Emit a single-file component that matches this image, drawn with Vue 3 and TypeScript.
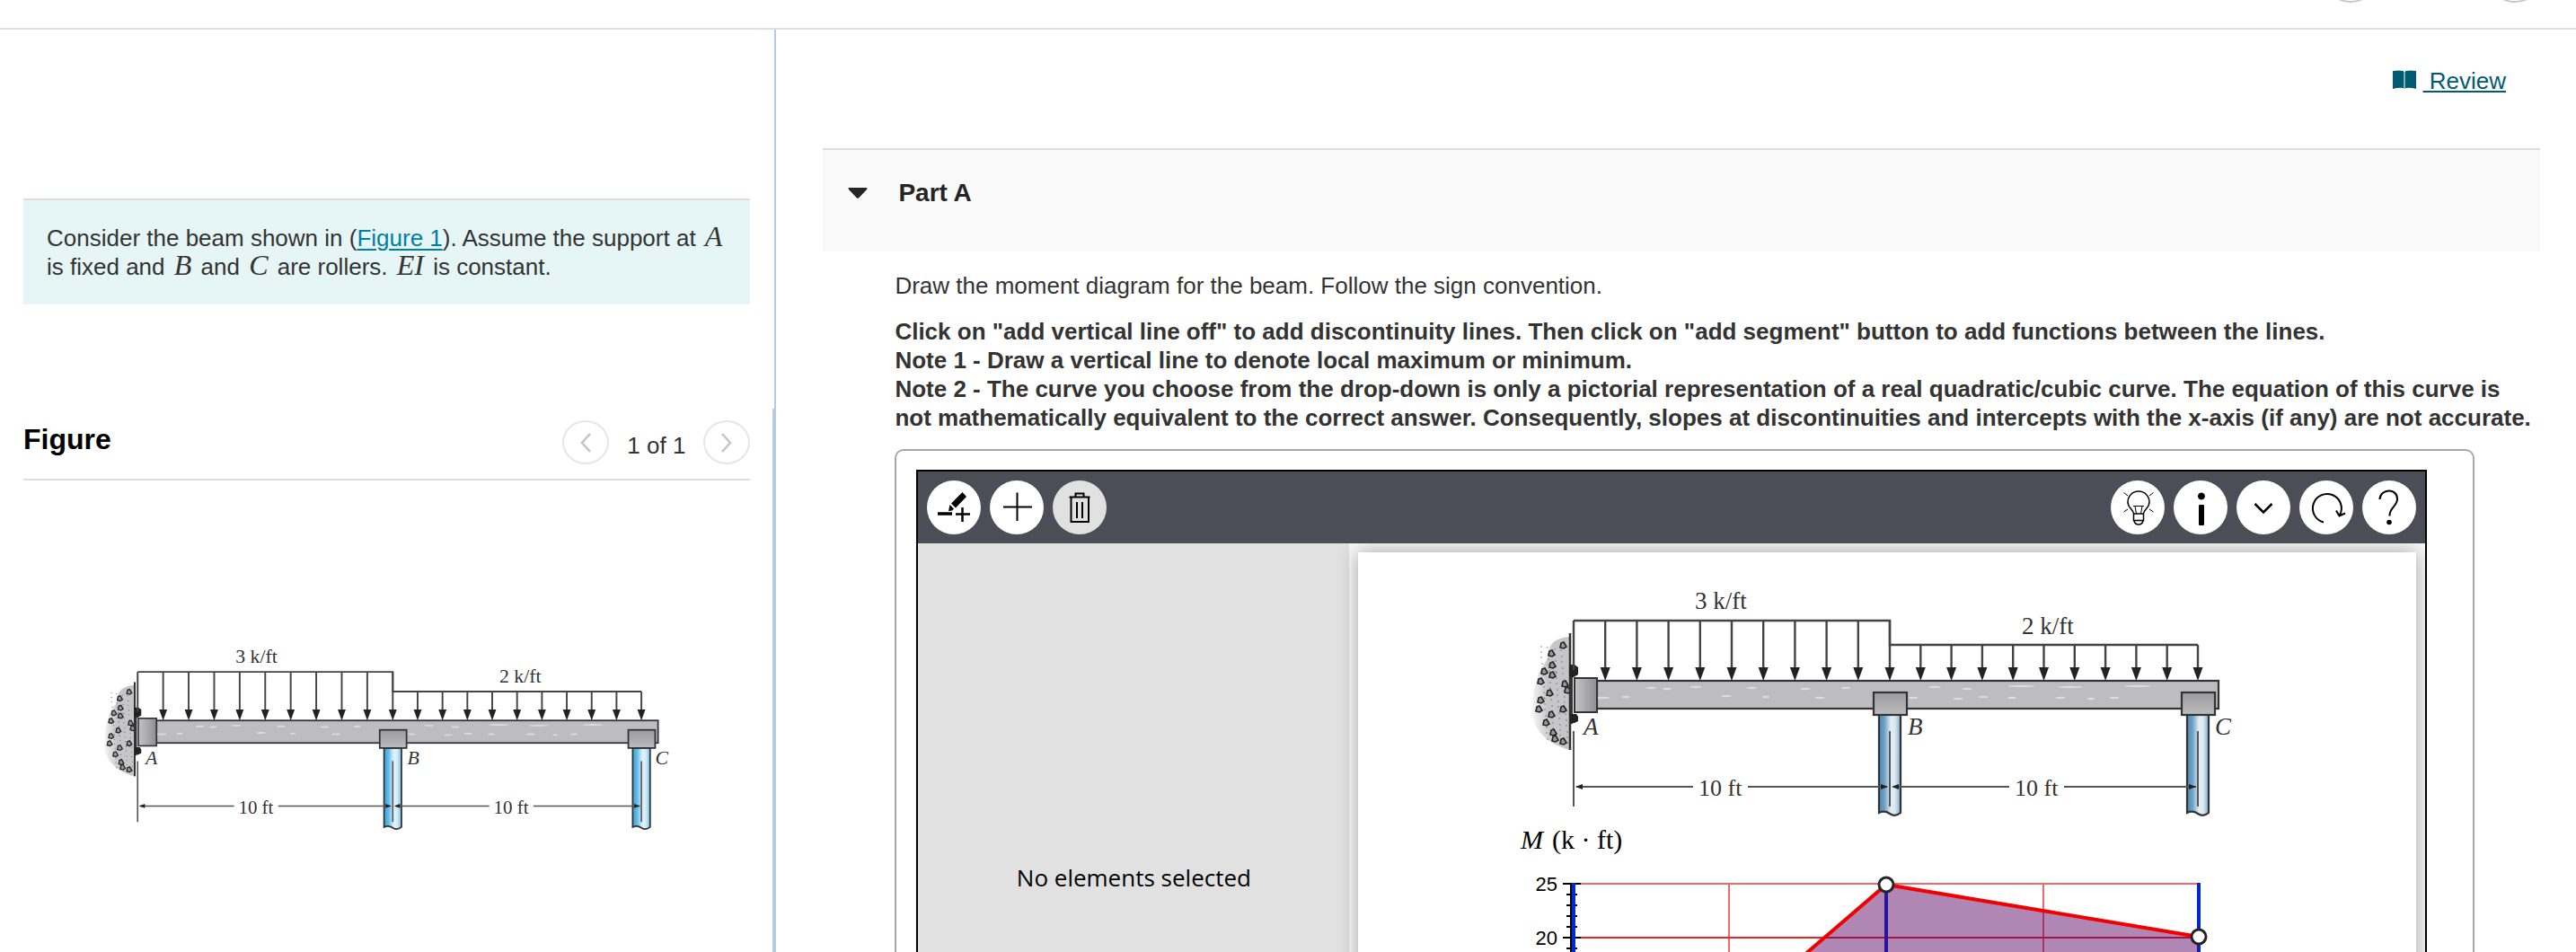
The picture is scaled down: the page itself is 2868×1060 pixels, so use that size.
<script setup lang="ts">
interface Label {
  text: string
  x: number
  y: number
  size: number
  italic?: boolean
}

interface ToolButton {
  name: string
  muted?: boolean
}

// Beam geometry, in drawing units
const arrowsLeft: number[] = Array.from({ length: 11 }, (_, i) => 92 + i * 35.2)
const arrowsRight: number[] = Array.from({ length: 10 }, (_, i) => 444 + (i + 1) * 34.3)
const posts: number[] = [444, 787]

// Wood grain streaks and stones in the wall
const grain: number[][] = [
  [124, 137, 18], [178, 126, 12], [196, 127, 10], [150, 136, 9], [228, 125, 14], [262, 135, 12],
  [290, 126, 12], [306, 136, 8], [350, 127, 12], [366, 137, 12], [395, 126, 10], [470, 137, 10],
  [494, 125, 14], [530, 127, 12], [520, 138, 12], [548, 136, 12], [590, 124, 30], [580, 137, 10],
  [645, 125, 28], [634, 137, 12], [668, 138, 8], [694, 137, 10], [720, 124, 30],
]
const stones: number[][] = [
  [79, 79], [66, 88], [67, 101], [58, 108], [67, 112], [54, 119], [81, 122], [64, 132],
  [84, 129], [54, 140], [52, 150], [79, 150], [66, 156], [60, 165], [68, 176], [70, 183], [79, 186],
]
const specks: number[][] = Array.from({ length: 70 }, (_, i) => [
  56 + ((i * 17) % 30),
  80 + ((i * 29) % 108),
])

const beamLabels: Label[] = [
  { text: '3 k/ft', x: 227, y: 38, size: 27 },
  { text: '2 k/ft', x: 591, y: 66, size: 27 },
  { text: '10 ft', x: 231, y: 246, size: 26 },
  { text: '10 ft', x: 583, y: 246, size: 26 },
  { text: 'A', x: 103, y: 178, size: 27, italic: true },
  { text: 'B', x: 464, y: 178, size: 27, italic: true },
  { text: 'C', x: 806, y: 178, size: 27, italic: true },
]

const editButtons: ToolButton[] = [
  { name: 'Add vertical line off' },
  { name: 'Add segment' },
  { name: 'Delete', muted: true },
]
const helpButtons: ToolButton[] = [
  { name: 'Hints' },
  { name: 'Information' },
  { name: 'More' },
  { name: 'Reset' },
  { name: 'Help' },
]

const minorTicks: number[] = [381, 393, 405, 417, 441, 453]
</script>

<template>
  <svg class="defs" aria-hidden="true">
    <defs>
      <linearGradient id="shine">
        <stop offset="0" stop-color="#fff" stop-opacity="0" />
        <stop offset="0.25" stop-color="#fff" stop-opacity="0.2" />
        <stop offset="0.55" stop-color="#fff" stop-opacity="0.85" />
        <stop offset="0.75" stop-color="#fff" stop-opacity="0.8" />
        <stop offset="1" stop-color="#fff" stop-opacity="0.3" />
      </linearGradient>
      <linearGradient id="block" x1="0" y1="0" x2="0" y2="1">
        <stop offset="0" stop-color="#9b9b9e" />
        <stop offset="1" stop-color="#bcbcbf" />
      </linearGradient>
      <linearGradient id="plate">
        <stop offset="0" stop-color="#c4c4c6" />
        <stop offset="1" stop-color="#8f8f92" />
      </linearGradient>
      <radialGradient id="rock" cx="1" cy="0.5" r="1">
        <stop offset="0.6" stop-color="#c6c6c8" />
        <stop offset="1" stop-color="#c6c6c8" stop-opacity="0.2" />
      </radialGradient>
      <symbol id="beam" viewBox="0 0 860 280">
        <path d="M87 69C74 70 64 76 64 88C62 100 54 102 52 114C46 128 48 134 46 150C46 170 58 186 87 195Z" fill="url(#rock)" />
        <circle v-for="(s, i) in specks" :key="'k' + i" :cx="s[0]" :cy="s[1]" r="0.7" fill="#666" />
        <path v-for="(s, i) in stones" :key="'s' + i" :d="`M${s[0] - 2} ${s[1] + 2}l1-5 3-1 3 5-3 2z`" class="stone" />
        <path d="M88 65V195" class="ink" stroke-width="2.5" />
        <path d="M90 105V166" class="ink" stroke-width="2" />
        <path d="M87 100h6l4 3v8l-5 3h-5zM88 155h7l2 3v5l-4 2h-5z" fill="#222" />
        <rect x="118" y="118" width="692" height="31" fill="#bdbdc0" class="ink" stroke-width="2.2" />
        <ellipse v-for="(g, i) in grain" :key="'g' + i" :cx="g[0]" :cy="g[1]" :rx="g[2] / 2" ry="1.2" fill="#dcdcde" />
        <rect x="93" y="115" width="25" height="38" fill="url(#plate)" class="ink" stroke-width="2" />
        <path d="M92 51H444V78H787" class="load" />
        <g v-for="x in arrowsLeft" :key="'l' + x">
          <path :d="`M${x} 51V106`" class="load" />
          <path v-if="x > 92" :d="`M${x - 5.5} 103h11l-5.5 15z`" fill="#222" />
        </g>
        <g v-for="x in arrowsRight" :key="'r' + x">
          <path :d="`M${x} 78V106`" class="load" />
          <path :d="`M${x - 5.5} 103h11l-5.5 15z`" fill="#222" />
        </g>
        <g v-for="x in posts" :key="'p' + x">
          <path :d="`M${x - 12} 156v109q6-3 12 1t12-1v-109z`" fill="currentColor" />
          <path :d="`M${x - 12} 156v109q6-3 12 1t12-1v-109z`" fill="url(#shine)" class="ink" stroke-width="2.2" />
          <rect :x="x - 18" y="131" width="37" height="25" fill="url(#block)" class="ink" stroke-width="2.2" />
          <path :d="`M${x} 174V258`" class="dim" />
        </g>
        <path d="M92 174V258M95 236H225M286 236H441M448 236H577M638 236H785" class="dim" />
        <path d="M94 236l8-3v6zM442 236l-8-3v6zM446 236l8-3v6zM785 236l-8-3v6z" fill="#222" />
      </symbol>
    </defs>
  </svg>

  <div class="app">
    <header class="topbar">
      <button class="round" aria-label="Previous item"></button>
      <button class="round" aria-label="Next item"></button>
    </header>

    <div class="panes">
      <aside class="problem">
        <p class="statement">
          Consider the beam shown in (<a href="#figure">Figure 1</a>). Assume the support at <i>A</i>
          is fixed and <i>B</i> and <i>C</i> are rollers. <i>EI</i> is constant.
        </p>
        <section id="figure" class="figure">
          <div class="figure-head">
            <h2>Figure</h2>
            <nav class="pager">
              <button aria-label="Previous figure">
                <svg viewBox="0 0 12 22" width="12" height="22"><path d="M11 1L2 11L11 21" /></svg>
              </button>
              <span>1 of 1</span>
              <button aria-label="Next figure">
                <svg viewBox="0 0 12 22" width="12" height="22"><path d="M1 1L10 11L1 21" /></svg>
              </button>
            </nav>
          </div>
          <svg class="figure-beam" viewBox="0 0 860 280">
            <use href="#beam" width="860" height="280" />
            <text
              v-for="l in beamLabels"
              :key="l.text + l.x"
              :x="l.x"
              :y="l.y"
              :font-size="l.size"
              :class="['beam-label', { italic: l.italic }]"
            >{{ l.text }}</text>
          </svg>
        </section>
      </aside>

      <div class="divider"></div>

      <main class="work">
        <div class="review">
          <a href="#review">
            <svg viewBox="0 0 26 22" width="26" height="22" aria-hidden="true">
              <path d="M0 1Q6 0 12 1V20Q6 19 0 21Z M14 1Q20 0 26 1V21Q20 19 14 20Z" fill="#005a70" />
              <path d="M13 2V21" stroke="#7fb0bc" stroke-width="2" />
            </svg>
            <span>&nbsp;Review</span>
          </a>
        </div>

        <section class="part">
          <h3>
            <svg viewBox="0 0 22 12" width="22" height="12" aria-hidden="true"><path d="M1 0H21Q22 1 21 2L12 11.500Q11 12 10 11.500L1 2Q0 1 1 0Z" fill="#252525" /></svg>
            Part A
          </h3>
        </section>

        <div class="content">
          <p>Draw the moment diagram for the beam. Follow the sign convention.</p>
          <p class="notes">
            Click on "add vertical line off" to add discontinuity lines. Then click on "add segment" button to add functions between the lines.<br />
            Note 1 - Draw a vertical line to denote local maximum or minimum.<br />
            Note 2 - The curve you choose from the drop-down is only a pictorial representation of a real quadratic/cubic curve. The equation of this curve is not mathematically equivalent to the correct answer. Consequently, slopes at discontinuities and intercepts with the x-axis (if any) are not accurate.
          </p>

          <div class="frame">
            <div class="tool">
              <div class="toolbar">
                <div class="group">
                  <button v-for="(b, i) in editButtons" :key="b.name" :aria-label="b.name" :class="{ muted: b.muted }">
                    <svg viewBox="0 0 60 60">
                      <template v-if="i === 0">
                        <path d="M12 37H28" stroke-width="3.500" />
                        <path d="M32 37.500H48M39.500 30V46" stroke-width="2.500" />
                        <path d="M39.500 13L44 18L32 30.500L27 25.500ZM25.500 27L30 31.500L28 33.500L24 34Z" fill="#000" stroke="none" />
                      </template>
                      <path v-else-if="i === 1" d="M15 29.500H47M30.500 13.500V45" />
                      <path v-else d="M20.500 18.500V46H40V18.500M18.500 18.500H41.500M25.500 18V14.500H34.500V18M27 24V42M33 24V42" />
                    </svg>
                  </button>
                </div>
                <div class="group">
                  <button v-for="(b, i) in helpButtons" :key="b.name" :aria-label="b.name">
                    <svg viewBox="0 0 60 60">
                      <template v-if="i === 0">
                        <path d="M25.500 37C25.500 32 19 31 19 24A12 12 0 0 1 43 24C43 31 36.500 32 36.500 37ZM25.500 37V44.500H36.500V37M26 45Q27 49 31 49T36 45" stroke-width="1.500" />
                        <path d="M25 28.500H37M27 28.500L28.500 37M35 28.500L33.500 37M14.500 13.500L19 17M47.500 13.500L43 17M14.500 35L19 32M47.500 35L43 32" stroke-width="1" />
                      </template>
                      <path v-else-if="i === 1" d="M31 13.500A4 4 0 1 1 30.900 13.500ZM28 28Q28 27 29 27H33Q34 27 34 28V49Q34 50 33 50H29Q28 50 28 49Z" fill="#000" stroke="none" />
                      <path v-else-if="i === 2" d="M20.500 26L30 35.500L39.500 26" stroke-width="2.500" />
                      <path v-else-if="i === 3" d="M27 46.500A16 16 0 1 1 45 38.500M41 33.500L44.500 39.500L51 36.500" />
                      <template v-else>
                        <path d="M19.500 21C20 9 39 8 39 20.500C39 29 30 30 30.500 39.500" />
                        <circle cx="30" cy="46.500" r="2.800" fill="#000" stroke="none" />
                      </template>
                    </svg>
                  </button>
                </div>
              </div>

              <div class="workspace">
                <div class="inspector">No elements selected</div>
                <div class="canvas">
                  <svg viewBox="0 0 1178 724">
                    <svg x="148" y="25" width="860" height="280" class="canvas-beam">
                      <use href="#beam" width="860" height="280" />
                      <text
                        v-for="l in beamLabels"
                        :key="l.text + l.x"
                        :x="l.x"
                        :y="l.y"
                        :font-size="l.size"
                        :class="['beam-label', { italic: l.italic }]"
                      >{{ l.text }}</text>
                    </svg>
                    <text x="181" y="330" class="axis-title"><tspan font-style="italic">M</tspan><tspan dx="10">(k · ft)</tspan></text>

                    <path d="M248 369H936M413 369V724M763 369V724" stroke="#f0686a" stroke-width="2" />
                    <path d="M248 429H936" stroke="#e82424" stroke-width="2" />
                    <path d="M237 368V724M228 369H248M228 429H248" stroke="#000" stroke-width="2" />
                    <path v-for="y in minorTicks" :key="y" :d="`M232 ${y}H244`" stroke="#000" stroke-width="2" />
                    <path d="M240 368V724M588 370V724M936 368V724" stroke="#0028d4" stroke-width="4" />
                    <path d="M240 669L588 370L936 428V724H240Z" fill="rgb(90 3 99 / 0.48)" />
                    <path d="M240 669L588 370L936 428" fill="none" stroke="#f20000" stroke-width="4" />
                    <circle cx="588" cy="370" r="8" class="node" />
                    <circle cx="936" cy="428" r="8" class="node" />
                    <text x="222" y="377" class="tick">25</text>
                    <text x="222" y="437" class="tick">20</text>
                  </svg>
                </div>
              </div>
            </div>
          </div>
        </div>
      </main>
    </div>
  </div>
</template>

<style>
body {
  margin: 0;
  background: #fff;
}
</style>

<style scoped>
.defs {
  position: absolute;
  width: 0;
  height: 0;
}

.app {
  display: flex;
  flex-direction: column;
  height: 100vh;
  overflow: hidden;
  font: 26px/32px "Liberation Sans", Arial, sans-serif;
  color: #333;
}

.topbar {
  display: flex;
  flex: none;
  justify-content: flex-end;
  align-items: flex-end;
  gap: 119px;
  box-sizing: border-box;
  height: 33px;
  padding: 0 36px 28px 0;
  border-bottom: 2px solid #dedede;
  overflow: hidden;
}

.round {
  flex: none;
  box-sizing: border-box;
  width: 64px;
  height: 64px;
  padding: 0;
  border: 2px solid #c7c7c7;
  border-radius: 50%;
  background: #fff;
}

.panes {
  display: flex;
  flex: 1;
  min-height: 0;
}

.problem {
  flex: 0 0 30%;
  box-sizing: border-box;
  padding: 188px 25px 0 26px;
}

.statement {
  box-sizing: border-box;
  min-height: 118px;
  margin: 0;
  padding: 26px 20px 26px 26px;
  border-top: 2px solid #dedede;
  background: #e6f6f7;
}

.statement a {
  color: #007fa3;
  text-underline-offset: 3px;
}

.statement i {
  padding: 0 3px;
  font: italic 32px/24px "Liberation Serif", serif;
}

.figure {
  padding-top: 129px;
}

.figure-head {
  display: flex;
  justify-content: space-between;
  align-items: flex-start;
  height: 65px;
  border-bottom: 2px solid #dedede;
}

.figure-head h2 {
  margin: 0;
  padding-top: 3px;
  font-size: 32px;
  line-height: 36px;
  color: #000;
}

.pager {
  display: flex;
  align-items: center;
  gap: 20px;
}

.pager span {
  padding-top: 6px;
}

.pager button {
  display: flex;
  justify-content: center;
  align-items: center;
  box-sizing: border-box;
  width: 52px;
  height: 49px;
  padding: 0;
  border: 2px solid #e6e6e6;
  border-radius: 50%;
  background: #fff;
}

.pager path {
  fill: none;
  stroke: #c4c4c4;
  stroke-width: 2.5;
}

.figure-beam {
  display: block;
  width: 694px;
  margin: 172px 0 0 53px;
  color: #38a8e0;
}

.canvas-beam {
  color: #4a8ab8;
}

.ink {
  stroke: #333;
}

.load,
.dim {
  fill: none;
  stroke: #444;
  stroke-width: 2.4;
}

.dim {
  stroke: #555;
  stroke-width: 2;
}

.stone {
  fill: #999;
  stroke: #222;
  stroke-width: 1.6;
}

.beam-label {
  font-family: "Liberation Serif", serif;
  fill: #333;
}

.italic {
  font-style: italic;
}

.divider {
  flex: none;
  width: 4px;
  background: linear-gradient(#b8cbdc, #b8cbdc) right top / 2px 100% no-repeat,
    linear-gradient(#b8cbdc, #b8cbdc) left 422px / 4px 100% no-repeat;
}

.work {
  flex: 1;
  min-width: 0;
  padding: 0 40px 0 52px;
}

.review {
  display: flex;
  justify-content: flex-end;
  height: 91px;
  padding: 41px 38px 0 0;
}

.review a {
  display: flex;
  gap: 8px;
  color: #005a70;
  text-decoration: none;
}

.review svg {
  padding-top: 4px;
}

.review span {
  height: 32px;
  text-decoration: underline;
}

.part {
  box-sizing: border-box;
  height: 115px;
  padding: 32px 28px;
  border-top: 2px solid #dedede;
  background: #f9f9f9;
}

.part h3 {
  display: flex;
  align-items: center;
  gap: 34px;
  margin: 0;
  font-size: 28px;
  line-height: 32px;
  color: #252525;
}

.content {
  padding: 22px 0 0 80px;
}

.content p {
  margin: 0;
}

.content .notes {
  margin-top: 19px;
  font-weight: bold;
}

.frame {
  box-sizing: border-box;
  width: min(1759px, 100%);
  margin-top: 19px;
  padding: 21px 51px 21px 22px;
  border: 2px solid #a8a8a8;
  border-radius: 10px;
}

.tool {
  border: 2px solid #000;
}

.toolbar {
  display: flex;
  justify-content: space-between;
  padding: 10px;
  background: #4d4d57;
}

.group {
  display: flex;
  gap: 10px;
}

.group button {
  width: 60px;
  height: 60px;
  padding: 0;
  border: 0;
  border-radius: 50%;
  background: #fff;
}

.group button.muted {
  background: #e1e1e1;
}

.group svg {
  display: block;
  fill: none;
  stroke: #000;
  stroke-width: 2;
}

.workspace {
  display: flex;
  background: #f8f8f8;
  overflow: hidden;
}

.inspector {
  display: flex;
  flex: 0 0 480px;
  justify-content: center;
  align-items: center;
  background: #e1e1e1;
  font-family: "Open Sans", "Noto Sans", sans-serif;
  color: #000;
}

.canvas {
  flex: 1;
  margin: 10px;
  background: #fff;
  box-shadow: 0 0 20px rgb(0 0 0 / 0.35);
}

.canvas > svg {
  display: block;
  width: 100%;
}

.axis-title {
  font: 30px "Liberation Serif", serif;
}

.tick {
  font-size: 22px;
  text-anchor: end;
}

.node {
  fill: #fff;
  stroke: #252525;
  stroke-width: 3;
}
</style>
